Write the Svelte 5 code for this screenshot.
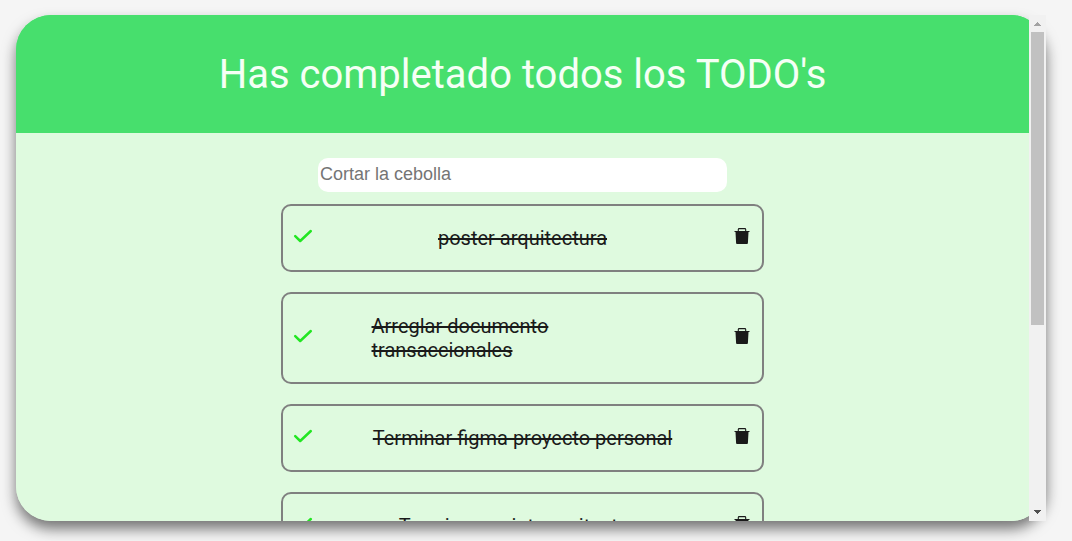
<script>
  let todos = $state([
    { id: 1, text: 'poster arquitectura', done: true },
    { id: 2, text: 'Arreglar documento transaccionales', done: true },
    { id: 3, text: 'Terminar figma proyecto personal', done: true },
    { id: 4, text: 'Terminar sprint arquitectura', done: true }
  ]);
  let pending = $derived(todos.filter((t) => !t.done).length);

  function remove(id) {
    todos = todos.filter((t) => t.id !== id);
  }
</script>

<main class="card">
  <div class="scroller">
    <header>
      <h1>
        {#if pending === 0}Has completado todos los TODO's{:else}{pending}{/if}
      </h1>
    </header>
    <section>
      <input type="search" aria-label="Cortar la cebolla" placeholder="Cortar la cebolla" />
      <ul>
        {#each todos as todo (todo.id)}
          <li>
            <button class="check" class:done={todo.done} aria-label="Completar" onclick={() => (todo.done = !todo.done)}>
              <svg viewBox="0 0 20 16" width="20" height="16">
                <path d="M2.2 8.2 7.2 13 17.8 3" fill="none" stroke="currentColor" stroke-width="2.5" stroke-linecap="round" stroke-linejoin="round" />
              </svg>
            </button>
            <p class:done={todo.done}>{todo.text}</p>
            <button class="trash" aria-label="Eliminar" onclick={() => remove(todo.id)}>
              <svg viewBox="0 0 16 16" width="16" height="16">
                <path d="M4.3 3V1.5Q4.3.6 5.2.6H10.8Q11.7.6 11.7 1.5V3" fill="none" stroke="currentColor" stroke-width="1.1" />
                <path d="M.5 2.9H15.5V4.1H14.5L13.9 15.2Q13.8 16 13 16H3Q2.2 16 2.1 15.2L1.5 4.1H.5Z" fill="currentColor" />
              </svg>
            </button>
          </li>
        {/each}
      </ul>
    </section>
  </div>
  <div class="scrollbar" aria-hidden="true">
    <svg viewBox="0 0 17 17" width="17" height="17" shape-rendering="crispEdges"><path d="M8 7h1v1h1v1h1v1h1v1H5v-1h1v-1h1v-1h1z" fill="#a3a3a3" /></svg>
    <div class="track"><div class="thumb"></div></div>
    <svg viewBox="0 0 17 17" width="17" height="17" shape-rendering="crispEdges"><path d="M5 6h7v1h-1v1h-1v1h-1v1h-1v-1h-1v-1h-1v-1h-1z" fill="#505050" /></svg>
  </div>
</main>

<style>
  :global(body) {
    background: #f5f5f5;
    font-family: Roboto, sans-serif;
    color: #1a1a1a;
  }
  .card {
    display: flex;
    position: relative;
    box-sizing: border-box;
    height: calc(100vh - 35px);
    margin: 15px 26px 20px 16px;
    border-radius: 35px;
    background: #dffadf;
    box-shadow: 0 8px 14px #757575;
  }
  .scroller {
    flex: 1;
    overflow: hidden;
    border-radius: 35px;
    padding-right: 17px;
    background: linear-gradient(#47df6d 118px, #dffadf 118px);
  }
  header {
    padding: 36px 20px 35px;
    background: #47df6d;
  }
  h1 {
    margin: 0;
    font-size: 40px;
    font-weight: 400;
    line-height: 47px;
    text-align: center;
    color: #f5fff5;
  }
  section {
    display: flex;
    flex-direction: column;
    align-items: center;
    padding-top: 25px;
  }
  input {
    box-sizing: border-box;
    width: min(409px, 90%);
    height: 34px;
    padding: 0 2px 2px;
    border: 0;
    border-radius: 10px;
    background: #fff;
    font-family: "Liberation Sans", Arial, sans-serif;
    font-size: 18px;
    appearance: none;
  }
  input::placeholder {
    color: #757575;
  }
  ul {
    display: flex;
    flex-direction: column;
    gap: 20px;
    width: min(483px, 95%);
    margin: 12px 0 0;
    padding: 0;
    list-style: none;
  }
  li {
    display: flex;
    align-items: center;
    justify-content: space-between;
    padding: 20px 10px;
    border: 2px solid #808080;
    border-radius: 10px;
  }
  p {
    max-width: 302px;
    margin: 0;
    font-size: 20px;
    line-height: 24px;
  }
  p.done {
    text-decoration: line-through;
  }
  button {
    display: flex;
    justify-content: center;
    width: 20px;
    padding: 0 0 4px;
    border: 0;
    background: none;
    color: #1a1a1a;
    cursor: pointer;
  }
  .check.done {
    color: #22e622;
  }
  .scrollbar {
    position: absolute;
    top: 0;
    right: 0;
    bottom: 0;
    display: flex;
    flex-direction: column;
    width: 17px;
    background: #f1f1f1;
  }
  .track {
    flex: 1;
    padding: 0 2px;
  }
  .thumb {
    height: 62%;
    background: #c1c1c1;
  }
</style>
